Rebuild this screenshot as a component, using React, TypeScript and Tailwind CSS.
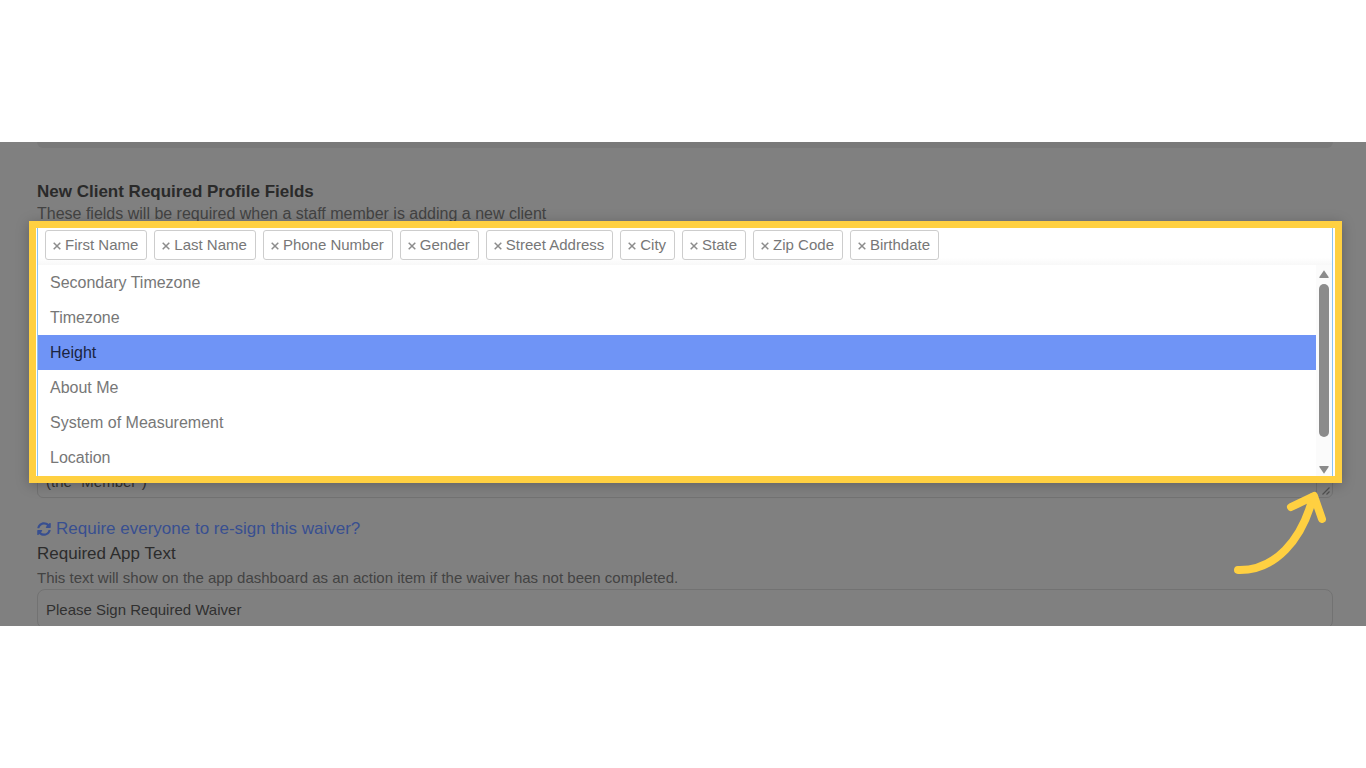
import React, { useState } from "react";
import { FaSyncAlt } from "react-icons/fa";

const initialFields = [
  "First Name",
  "Last Name",
  "Phone Number",
  "Gender",
  "Street Address",
  "City",
  "State",
  "Zip Code",
  "Birthdate",
];

const options = [
  "Secondary Timezone",
  "Timezone",
  "Height",
  "About Me",
  "System of Measurement",
  "Location",
];

type TagProps = {
  label: string;
  onRemove: () => void;
};

function Tag({ label, onRemove }: TagProps) {
  return (
    <li className="flex h-[30px] items-center gap-1 rounded-[3px] border border-[#cdcdcd] bg-white pr-2 pl-[7px] text-[15px] text-[#777]">
      <button type="button" aria-label={`Remove ${label}`} onClick={onRemove}>
        <svg viewBox="0 0 8 8" className="mt-0.5 h-2 w-2" stroke="#8c8c8c" strokeWidth="1.5">
          <path d="M0.7 0.7 7.3 7.3M7.3 0.7 0.7 7.3" />
        </svg>
      </button>
      <span className="whitespace-nowrap">{label}</span>
    </li>
  );
}

function ScrollTrack() {
  return (
    <div aria-hidden="true" className="flex w-4 flex-col items-center bg-[#fbfbfb] pt-[5px] pb-0.5">
      <svg viewBox="0 0 10 8" className="h-2 w-2.5" fill="#8b8b8b">
        <path d="M5 0.3 9.8 7.2Q9.8 8 9 8H1Q0.2 8 0.2 7.2Z" />
      </svg>
      <div className="mt-1.5 h-[153px] w-2.5 rounded-full bg-[#8b8b8b]" />
      <svg viewBox="0 0 10 8" className="mt-auto h-2 w-2.5" fill="#8b8b8b">
        <path d="M5 7.7 9.8 0.8Q9.8 0 9 0H1Q0.2 0 0.2 0.8Z" />
      </svg>
    </div>
  );
}

function FieldPicker() {
  const [fields, setFields] = useState(initialFields);
  const [active, setActive] = useState("Height");

  return (
    <div className="relative z-10 -mt-[3px] -mr-[9px] -ml-2 border-[7px] border-[#ffd041] bg-white shadow-[0_2px_12px_rgba(0,0,0,0.25)]">
      <div className="mr-0.5 ml-px border-x border-[#8cc4f0]">
        <div className="flex h-[37px] items-start bg-linear-to-b from-white from-80% to-[#f8f8f8] pt-0.5 pl-[7px]">
          <ul className="flex gap-[7px]">
            {fields.map((field) => (
              <Tag
                key={field}
                label={field}
                onRemove={() => setFields(fields.filter((f) => f !== field))}
              />
            ))}
          </ul>
          <input
            type="text"
            aria-label="Add a required field"
            className="h-[30px] min-w-0 flex-1 bg-transparent px-2 outline-none"
          />
        </div>
        <div className="flex h-[211px]">
          <div role="listbox" aria-label="Profile fields" className="flex-1 overflow-hidden">
            {options.map((option) => (
              <button
                key={option}
                type="button"
                role="option"
                aria-selected={option === active}
                onClick={() => setActive(option)}
                className={
                  option === active
                    ? "block h-[35px] w-full bg-[#6f94f6] px-3 text-left text-[#1b2440]"
                    : "block h-[35px] w-full px-3 text-left text-[#777]"
                }
              >
                {option}
              </button>
            ))}
          </div>
          <ScrollTrack />
        </div>
      </div>
    </div>
  );
}

function PointerArrow() {
  return (
    <svg
      aria-hidden="true"
      viewBox="0 0 100 90"
      className="absolute right-9 bottom-12 z-20 h-[90px] w-[100px]"
      fill="none"
      stroke="#ffd041"
      strokeWidth="8"
      strokeLinecap="round"
      strokeLinejoin="round"
    >
      <path d="M8 82C45 83 72 52 83 9" />
      <path d="M61 19 84 8 92 31" />
    </svg>
  );
}

function App() {
  return (
    <main className="min-h-screen bg-white pt-[142px] font-['Liberation_Sans',Arial,sans-serif] text-base">
      <section className="relative overflow-hidden bg-[#808080] pr-[33px] pl-[37px]">
        <div className="h-[6px] rounded-b-md bg-[#797979]" />

        <h2 className="mt-8 text-[17px] leading-6 font-bold text-[#2a2a2a]">
          New Client Required Profile Fields
        </h2>
        <p className="leading-5 text-[#434343]">
          These fields will be required when a staff member is adding a new client
        </p>

        <FieldPicker />

        <div className="-mt-5 flex h-[35px] rounded-b-md border border-[#727272]">
          <textarea
            aria-label="Waiver text"
            defaultValue={'(the "Member")'}
            className="h-full flex-1 resize-none overflow-hidden bg-transparent px-2 pt-2 text-[15px] leading-5 text-[#303030] outline-none"
          />
          <div className="flex w-4 items-end justify-end border-l border-[#727272] pr-0.5 pb-0.5">
            <svg viewBox="0 0 8 8" className="h-2 w-2" stroke="#505050" strokeWidth="1.2">
              <path d="M0.5 7.5 7.5 0.5M4.5 7.5 7.5 4.5" />
            </svg>
          </div>
        </div>

        <a
          href="#resign"
          className="mt-[19px] flex items-center gap-[5px] text-[17px] leading-6 text-[#384f90]"
        >
          <FaSyncAlt className="h-3.5 w-3.5" />
          Require everyone to re-sign this waiver?
        </a>
        <label htmlFor="app-text" className="block text-[17px] leading-[26px] text-[#2c2c2c]">
          Required App Text
        </label>
        <p className="text-[15px] leading-[22px] text-[#434343]">
          This text will show on the app dashboard as an action item if the waiver has not been completed.
        </p>
        <div className="h-[37px] overflow-hidden">
          <input
            id="app-text"
            type="text"
            defaultValue="Please Sign Required Waiver"
            className="h-10 w-full rounded-lg border border-[#727272] bg-transparent px-2 text-[15px] text-[#303030] outline-none"
          />
        </div>

        <PointerArrow />
      </section>
    </main>
  );
}

export default App;
